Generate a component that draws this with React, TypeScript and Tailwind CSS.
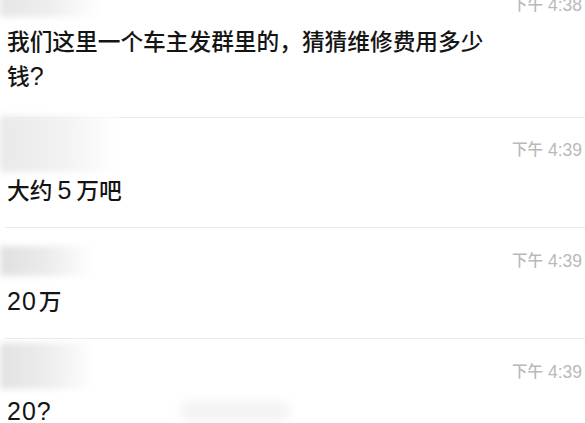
import React from "react";

const Time = ({ t }: { t: string }) => (
  <div className="flex h-[16px] items-center justify-end pr-[3px] leading-[16px] text-[#b9b9b9]">
    <span className="text-[15.5px]">下午</span>
    <span className="ml-[5px] text-[17.5px]">{t}</span>
  </div>
);

const Blur = ({ cls }: { cls: string }) => (
  <div className={"pointer-events-none absolute left-0 blur-[3px] bg-linear-to-r " + cls} />
);

export default function App() {
  return (
    <div className="relative h-[423px] w-[585px] overflow-hidden bg-white font-['Liberation_Sans','Noto_Sans_CJK_SC',sans-serif] font-medium text-[#141414]">
      {/* row 0 */}
      <div className="relative pb-[22px]">
        <Blur cls="top-[-6px] h-[26px] w-[100px] from-[#e6e6e6] via-[#eeeeee] to-white" />
        <div className="-mt-[3px]">
          <Time t="4:38" />
        </div>
        <div className="mt-[12px] w-[492px] pl-[7px] text-[22.7px] leading-[35px]">
          我们这里一个车主发群里的，猜猜维修费用多少钱<span className="text-[25px] leading-[20px]">?</span>
        </div>
      </div>

      {/* row 1 */}
      <div className="relative pb-[21px]">
        <div className="ml-[5px] h-px bg-[#ebebeb]" />
        <Blur cls="top-[-1px] h-[56px] w-[118px] from-[#e9e9e9] via-[#f1f1f1] to-white" />
        <div className="mt-[24px]">
          <Time t="4:39" />
        </div>
        <div className="mt-[17px] pl-[7px] text-[22.7px] leading-[30px]">
          大约<span className="mx-[5px] text-[25px]">5</span>万吧
        </div>
      </div>

      {/* row 2 */}
      <div className="relative pb-[21px]">
        <div className="ml-[5px] h-px bg-[#ebebeb]" />
        <Blur cls="top-[19px] h-[30px] w-[92px] from-[#e0e0e0] via-[#ebebeb] to-white" />
        <div className="mt-[25px]">
          <Time t="4:39" />
        </div>
        <div className="mt-[17px] pl-[7px] text-[22.7px] leading-[30px]">
          <span className="mr-[2px] text-[25px] tracking-[1px]">20</span>万
        </div>
      </div>

      {/* row 3 */}
      <div className="relative pb-[21px]">
        <div className="ml-[5px] h-px bg-[#ebebeb]" />
        <Blur cls="top-[5px] h-[46px] w-[95px] from-[#e2e2e2] via-[#ededed] to-white" />
        <div className="mt-[25px]">
          <Time t="4:39" />
        </div>
        <div className="relative mt-[16px] pl-[7px] text-[25px] leading-[30px] tracking-[1px]">
          20?
          <div className="pointer-events-none absolute left-[180px] top-[4px] h-[22px] w-[110px] rounded-full bg-[#f4f4f4] blur-[5px]" />
        </div>
      </div>
    </div>
  );
}
